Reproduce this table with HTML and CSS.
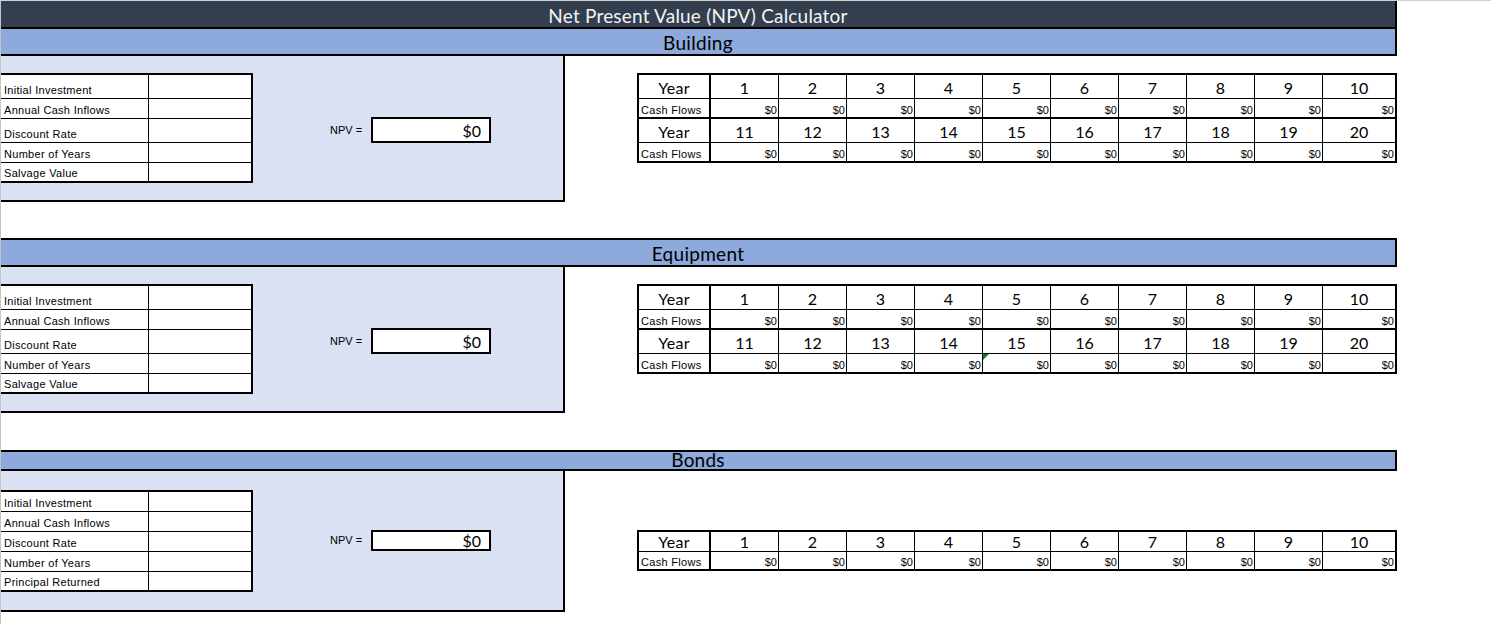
FILE: index.html
```html
<!DOCTYPE html>
<html lang="en">
<head>
<meta charset="utf-8">
<title>Net Present Value (NPV) Calculator</title>
<link rel="stylesheet" href="styles.css">
</head>
<body>
<div class="sheet">
  <div class="title">Net Present Value (NPV) Calculator</div>

  <section class="section section--first">
    <div class="band">Building</div>
    <div class="body">
      <div class="panel">
        <div class="inputs">
          <div class="in-label">Initial Investment</div><div class="in-value"></div>
          <div class="in-label">Annual Cash Inflows</div><div class="in-value"></div>
          <div class="in-label">Discount Rate</div><div class="in-value"></div>
          <div class="in-label">Number of Years</div><div class="in-value"></div>
          <div class="in-label">Salvage Value</div><div class="in-value"></div>
        </div>
        <div class="npv">
          <span class="npv-label">NPV =</span>
          <div class="npv-box">$0</div>
        </div>
      </div>
      <div class="years">
        <div class="yr-block">
          <div class="yr-head yr-label">Year</div>
          <div class="yr-head">1</div><div class="yr-head">2</div><div class="yr-head">3</div><div class="yr-head">4</div><div class="yr-head">5</div>
          <div class="yr-head">6</div><div class="yr-head">7</div><div class="yr-head">8</div><div class="yr-head">9</div><div class="yr-head">10</div>
          <div class="cf-label yr-label">Cash Flows</div>
          <div class="cf">$0</div><div class="cf">$0</div><div class="cf">$0</div><div class="cf">$0</div><div class="cf">$0</div>
          <div class="cf">$0</div><div class="cf">$0</div><div class="cf">$0</div><div class="cf">$0</div><div class="cf">$0</div>
        </div>
        <div class="yr-block">
          <div class="yr-head yr-label">Year</div>
          <div class="yr-head">11</div><div class="yr-head">12</div><div class="yr-head">13</div><div class="yr-head">14</div><div class="yr-head">15</div>
          <div class="yr-head">16</div><div class="yr-head">17</div><div class="yr-head">18</div><div class="yr-head">19</div><div class="yr-head">20</div>
          <div class="cf-label yr-label">Cash Flows</div>
          <div class="cf">$0</div><div class="cf">$0</div><div class="cf">$0</div><div class="cf">$0</div><div class="cf">$0</div>
          <div class="cf">$0</div><div class="cf">$0</div><div class="cf">$0</div><div class="cf">$0</div><div class="cf">$0</div>
        </div>
      </div>
    </div>
  </section>

  <section class="section section--equipment">
    <div class="band">Equipment</div>
    <div class="body">
      <div class="panel">
        <div class="inputs">
          <div class="in-label">Initial Investment</div><div class="in-value"></div>
          <div class="in-label">Annual Cash Inflows</div><div class="in-value"></div>
          <div class="in-label">Discount Rate</div><div class="in-value"></div>
          <div class="in-label">Number of Years</div><div class="in-value"></div>
          <div class="in-label">Salvage Value</div><div class="in-value"></div>
        </div>
        <div class="npv">
          <span class="npv-label">NPV =</span>
          <div class="npv-box">$0</div>
        </div>
      </div>
      <div class="years">
        <div class="yr-block">
          <div class="yr-head yr-label">Year</div>
          <div class="yr-head">1</div><div class="yr-head">2</div><div class="yr-head">3</div><div class="yr-head">4</div><div class="yr-head">5</div>
          <div class="yr-head">6</div><div class="yr-head">7</div><div class="yr-head">8</div><div class="yr-head">9</div><div class="yr-head">10</div>
          <div class="cf-label yr-label">Cash Flows</div>
          <div class="cf">$0</div><div class="cf">$0</div><div class="cf">$0</div><div class="cf">$0</div><div class="cf">$0</div>
          <div class="cf">$0</div><div class="cf">$0</div><div class="cf">$0</div><div class="cf">$0</div><div class="cf">$0</div>
        </div>
        <div class="yr-block">
          <div class="yr-head yr-label">Year</div>
          <div class="yr-head">11</div><div class="yr-head">12</div><div class="yr-head">13</div><div class="yr-head">14</div><div class="yr-head">15</div>
          <div class="yr-head">16</div><div class="yr-head">17</div><div class="yr-head">18</div><div class="yr-head">19</div><div class="yr-head">20</div>
          <div class="cf-label yr-label">Cash Flows</div>
          <div class="cf">$0</div><div class="cf">$0</div><div class="cf">$0</div><div class="cf">$0</div><div class="cf cf--flag">$0</div>
          <div class="cf">$0</div><div class="cf">$0</div><div class="cf">$0</div><div class="cf">$0</div><div class="cf">$0</div>
        </div>
      </div>
    </div>
  </section>

  <section class="section section--bonds">
    <div class="band">Bonds</div>
    <div class="body">
      <div class="panel">
        <div class="inputs">
          <div class="in-label">Initial Investment</div><div class="in-value"></div>
          <div class="in-label">Annual Cash Inflows</div><div class="in-value"></div>
          <div class="in-label">Discount Rate</div><div class="in-value"></div>
          <div class="in-label">Number of Years</div><div class="in-value"></div>
          <div class="in-label">Principal Returned</div><div class="in-value"></div>
        </div>
        <div class="npv">
          <span class="npv-label">NPV =</span>
          <div class="npv-box">$0</div>
        </div>
      </div>
      <div class="years">
        <div class="yr-block">
          <div class="yr-head yr-label">Year</div>
          <div class="yr-head">1</div><div class="yr-head">2</div><div class="yr-head">3</div><div class="yr-head">4</div><div class="yr-head">5</div>
          <div class="yr-head">6</div><div class="yr-head">7</div><div class="yr-head">8</div><div class="yr-head">9</div><div class="yr-head">10</div>
          <div class="cf-label yr-label">Cash Flows</div>
          <div class="cf">$0</div><div class="cf">$0</div><div class="cf">$0</div><div class="cf">$0</div><div class="cf">$0</div>
          <div class="cf">$0</div><div class="cf">$0</div><div class="cf">$0</div><div class="cf">$0</div><div class="cf">$0</div>
        </div>
      </div>
    </div>
  </section>
</div>
</body>
</html>
```

FILE: styles.css
```css
* {
  box-sizing: border-box;
  margin: 0;
  padding: 0;
}

html, body {
  background: #ffffff;
}

body {
  margin: 0;
  width: 1491px;
  height: 624px;
  overflow: hidden;
  font-family: "Liberation Sans", Arial, sans-serif;
  color: #000;
}

.sheet {
  height: 624px;
  border-top: 1px solid #d0d0d0;
  border-left: 1px solid #c4c4c4;
}

.title {
  width: 1396px;
  height: 28px;
  padding-top: 3px;
  background: #333f4f;
  border-right: 2px solid #000;
  border-bottom: 2px solid #000;
  color: #f4f4f4;
  font-family: Lato, "Open Sans", sans-serif;
  font-size: 19px;
  letter-spacing: 0.2px;
  line-height: 23px;
  text-align: center;
  overflow: hidden;
}

.band {
  width: 1396px;
  height: 27px;
  padding-top: 2px;
  background: #8ea9db;
  border-right: 2px solid #000;
  border-bottom: 2px solid #000;
  font-family: Lato, "Open Sans", sans-serif;
  font-size: 19px;
  letter-spacing: 0.3px;
  line-height: 24px;
  text-align: center;
}

.section--equipment {
  margin-top: 36px;
}

.section--equipment .band {
  height: 29px;
  border-top: 2px solid #000;
}

.section--bonds {
  margin-top: 37px;
}

.section--bonds .band {
  height: 21px;
  padding-top: 0;
  border-top: 2px solid #000;
  letter-spacing: 0.2px;
  line-height: 16px;
}

.body {
  display: flex;
  align-items: flex-start;
}

.panel {
  width: 564px;
  height: 146px;
  background: #d9e1f2;
  border-right: 2px solid #000;
  border-bottom: 2px solid #000;
  display: flex;
  align-items: center;
}

.section--bonds .panel {
  height: 141px;
}

.inputs {
  width: 252px;
  display: grid;
  grid-template-columns: 147px 102px;
  grid-template-rows: 23px 19px 23px 19px 18px;
  gap: 1px;
  background: #000;
  border: 2px solid #000;
  border-left: 0;
}

.section--bonds .inputs {
  grid-template-rows: 19px 19px 19px 19px 18px;
}

.in-label,
.in-value {
  background: #fff;
}

.in-label {
  display: flex;
  align-items: flex-end;
  padding: 0 0 1px 3px;
  font-size: 11px;
  line-height: 13px;
  letter-spacing: 0.3px;
  white-space: nowrap;
}

.npv {
  display: flex;
  align-items: center;
  gap: 9px;
  margin-left: 77px;
  margin-top: 4px;
}

.section--bonds .npv {
  margin-top: 0;
}

.npv-label {
  font-size: 11px;
  line-height: 13px;
}

.npv-box {
  width: 120px;
  height: 26px;
  border: 2px solid #000;
  background: #fff;
  font-family: Lato, "Open Sans", sans-serif;
  font-size: 16px;
  line-height: 24px;
  text-align: right;
  padding-right: 8px;
}

.section--bonds .npv-box {
  height: 21px;
  line-height: 18px;
}

.years {
  width: 760px;
  margin-left: 72px;
  margin-top: 17px;
  display: flex;
  flex-direction: column;
  gap: 2px;
  background: #000;
  border: 2px solid #000;
}

.section--bonds .years {
  margin-top: 59px;
}

.yr-block {
  display: grid;
  grid-template-columns: 71px repeat(9, 67px) 72px;
  grid-template-rows: 23px 18px;
  gap: 1px;
}

.section--bonds .yr-block {
  grid-template-rows: 19px 17px;
}

.yr-head,
.cf,
.cf-label {
  background: #fff;
  display: flex;
  align-items: flex-end;
}

.yr-label {
  border-right: 1px solid #000;
}

.yr-head {
  justify-content: center;
  font-family: Lato, "Open Sans", sans-serif;
  font-size: 16px;
  line-height: 19px;
  padding-bottom: 1px;
}

.yr-head.yr-label {
  letter-spacing: 0.3px;
}

.section--bonds .yr-head {
  padding-bottom: 0;
  line-height: 18px;
}

.cf-label {
  padding: 0 0 0 2px;
  font-size: 11px;
  line-height: 13px;
  letter-spacing: 0.3px;
  white-space: nowrap;
}

.cf {
  justify-content: flex-end;
  padding: 0 1px 0 0;
  font-size: 11px;
  line-height: 13px;
}

.cf--flag {
  position: relative;
}

.cf--flag::before {
  content: "";
  position: absolute;
  top: 0;
  left: 0;
  border-top: 6px solid #1d7a1d;
  border-right: 6px solid transparent;
}
```
